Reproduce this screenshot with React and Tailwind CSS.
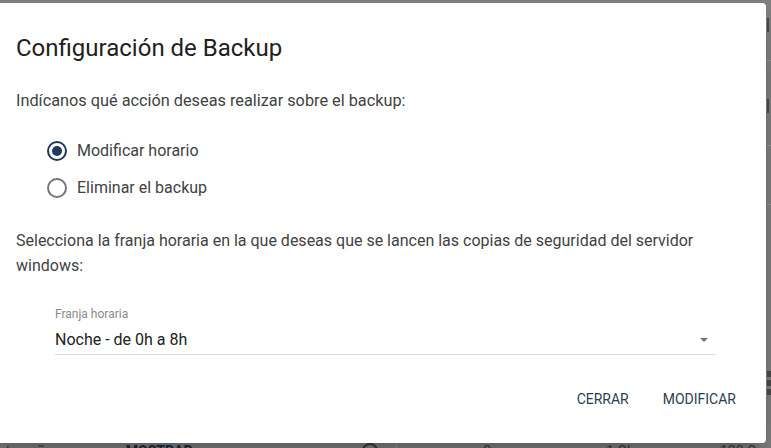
import React from "react";

function Radio({ checked }) {
  return (
    <span
      className={
        "flex h-[20px] w-[20px] items-center justify-center rounded-full border-2 " +
        (checked ? "border-[#1f3a5c]" : "border-[#757575]")
      }
    >
      {checked && <span className="h-[10px] w-[10px] rounded-full bg-[#1f3a5c]" />}
    </span>
  );
}

export default function App() {
  return (
    <div
      className="relative h-[448px] w-[771px] overflow-hidden bg-[#808080]"
      style={{ fontFamily: "Roboto, 'Liberation Sans', sans-serif" }}
    >
      {/* dimmed page behind the dialog */}
      <div className="absolute left-0 top-[441px] flex h-[20px] w-[771px] items-center whitespace-nowrap text-[14px] text-[#3a3a3a]">
        <span className="ml-[-2px]">ntraseña:</span>
        <span className="ml-[70px] font-bold text-[#1b2a3a]">MOSTRAR</span>
        <span className="ml-[170px] h-[16px] w-[16px] rounded-full border-2 border-[#3a3a3a]" />
        <span className="ml-[18px] h-[20px] w-px bg-[#9a9a9a]" />
        <span className="ml-[86px]">2</span>
        <span className="ml-[115px]">1 Gb</span>
        <span className="ml-[85px]">120 G</span>
      </div>
      <div className="absolute left-[767px] top-0 flex h-[448px] w-[4px] flex-col">
        <div className="mt-[18px] h-[14px] w-[2px] bg-[#4a4a4a]" />
        <div className="mt-[28px] h-px w-[4px] bg-[#959595]" />
        <div className="mt-[38px] h-[14px] w-[2px] bg-[#4a4a4a]" />
        <div className="mt-[32px] h-px w-[4px] bg-[#959595]" />
        <div className="mt-[58px] h-px w-[4px] bg-[#959595]" />
        <div className="mt-[166px] h-[6px] w-[4px] bg-[#4a4a4a]" />
        <div className="mt-[3px] h-[6px] w-[4px] bg-[#4a4a4a]" />
        <div className="mt-[3px] h-[6px] w-[4px] bg-[#4a4a4a]" />
      </div>

      {/* dialog */}
      <div className="absolute left-[-10px] top-[3px] flex h-[440px] w-[776px] flex-col rounded-[4px] bg-white pl-[26px] shadow-[0_11px_15px_-7px_rgba(0,0,0,0.2),0_24px_38px_3px_rgba(0,0,0,0.14)]">
        <h2 className="mt-[29px] h-[32px] text-[24px] leading-[32px] font-normal text-[#212121]">
          Configuración de Backup
        </h2>
        <p className="mt-[25px] text-[16.3px] leading-[24px] text-[#424242]">
          Indícanos qué acción deseas realizar sobre el backup:
        </p>
        <div className="mt-[19px] flex flex-col pl-[31px]">
          <div className="flex h-[37px] items-center gap-[10px] text-[16px] text-[#424242]">
            <Radio checked />
            <span>Modificar horario</span>
          </div>
          <div className="flex h-[37px] items-center gap-[10px] text-[16px] text-[#424242]">
            <Radio />
            <span>Eliminar el backup</span>
          </div>
        </div>
        <p className="mt-[22px] w-[730px] text-[16px] leading-[25px] text-[#424242]">
          Selecciona la franja horaria en la que deseas que se lancen las copias de seguridad del servidor windows:
        </p>
        <div className="ml-[39px] mt-[28px] flex w-[661px] flex-col">
          <span className="text-[12px] leading-[16px] text-[#8a8a8a]">Franja horaria</span>
          <div className="mt-[6px] flex items-center justify-between border-b border-[#dcdcdc] pb-[2px]">
            <span className="text-[16px] leading-[24px] text-[#212121]">Noche - de 0h a 8h</span>
            <svg width="24" height="24" viewBox="0 0 24 24">
              <path d="M8 10l4 4 4-4z" fill="#757575" />
            </svg>
          </div>
        </div>
        <div className="mt-[26px] flex h-[36px] items-center justify-end gap-[18px] pr-[22px] text-[14px] tracking-[0px] text-[#2d3e50]">
          <span className="px-[8px]">CERRAR</span>
          <span className="px-[8px]">MODIFICAR</span>
        </div>
      </div>
    </div>
  );
}
